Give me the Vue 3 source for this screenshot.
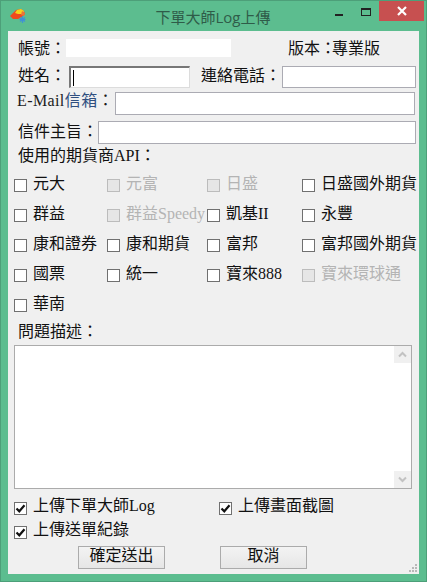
<script setup>
const brokers = [
  { name: '元大' },
  { name: '元富', disabled: true },
  { name: '日盛', disabled: true },
  { name: '日盛國外期貨' },
  { name: '群益' },
  { name: '群益Speedy', disabled: true },
  { name: '凱基II' },
  { name: '永豐' },
  { name: '康和證券' },
  { name: '康和期貨' },
  { name: '富邦' },
  { name: '富邦國外期貨' },
  { name: '國票' },
  { name: '統一' },
  { name: '寶來888' },
  { name: '寶來環球通', disabled: true },
  { name: '華南' }
]

const uploads = ['上傳下單大師Log', '上傳畫面截圖', '上傳送單紀錄']
</script>

<template>
  <div class="window">
    <div class="titlebar">
      <svg class="app-icon" width="18" height="16" viewBox="0 0 18 16">
        <path d="M1 9 L4 6 L7 3 L12 2 L15 4 L16 7 L13 10 L9 12 L4 12 Z" fill="#f04a1e" />
        <path d="M6 6 L8 3 L12 2 L15 4 L14 7 L9 7 Z" fill="#f7d21c" />
        <path d="M13 4 L16 6 L15 9 L12 8 Z" fill="#e8743a" />
        <path d="M13.5 9 V16 M10.5 12.5 H16.5 M11 10.5 L16 14.5 M16 10.5 L11 14.5" stroke="#3f8fd8" stroke-width="1.2" />
      </svg>
      <span class="title">下單大師Log上傳</span>
      <div class="controls">
        <span class="min"></span>
        <span class="max"></span>
        <span class="close">
          <svg width="10" height="10" viewBox="0 0 10 10">
            <path d="M1 1 L9 9 M9 1 L1 9" stroke="#fff" stroke-width="2.2" />
          </svg>
        </span>
      </div>
    </div>

    <div class="client">
      <div class="row row-account">
        <span class="label">帳號：</span>
        <div class="account-value"></div>
        <span class="version">版本<span class="tight">：</span>專業版</span>
      </div>

      <div class="row row-name">
        <span class="label">姓名：</span>
        <div class="field name-field"><i class="caret"></i></div>
        <span class="label contact-label">連絡電話：</span>
        <div class="field contact-field"></div>
      </div>

      <div class="row row-email">
        <span class="label email-label">E-Mail<em>信箱</em>：</span>
        <div class="field grow"></div>
      </div>

      <div class="row row-subject">
        <span class="label">信件主旨：</span>
        <div class="field grow"></div>
      </div>

      <div class="section-label api-label">使用的期貨商API：</div>

      <div class="broker-grid">
        <label v-for="b in brokers" :key="b.name" class="check" :class="{ off: b.disabled }">
          <span class="box"></span>
          <span class="check-text">{{ b.name }}</span>
        </label>
      </div>

      <div class="section-label desc-label">問題描述：</div>

      <div class="textarea">
        <div class="scrollbar">
          <span class="arrow">
            <svg width="9" height="7" viewBox="0 0 9 7"><path d="M1 5.5 L4.5 2 L8 5.5" fill="none" stroke="#c2c2c2" stroke-width="2" /></svg>
          </span>
          <span class="arrow">
            <svg width="9" height="7" viewBox="0 0 9 7"><path d="M1 1.5 L4.5 5 L8 1.5" fill="none" stroke="#c2c2c2" stroke-width="2" /></svg>
          </span>
        </div>
      </div>

      <div class="upload-grid">
        <label v-for="u in uploads" :key="u" class="check">
          <span class="box">
            <svg width="11" height="11" viewBox="0 0 11 11"><path d="M1.5 5.5 L4.3 8.3 L9.5 2.2" fill="none" stroke="#111" stroke-width="2.2" /></svg>
          </span>
          <span class="check-text">{{ u }}</span>
        </label>
      </div>

      <div class="buttons">
        <button class="btn"><span>確定送出</span></button>
        <button class="btn"><span>取消</span></button>
      </div>

      <svg class="grip" width="9" height="9" viewBox="0 0 9 9" fill="#b8b8b8">
        <rect x="6" y="0" width="2" height="2" />
        <rect x="3" y="3" width="2" height="2" />
        <rect x="6" y="3" width="2" height="2" />
        <rect x="0" y="6" width="2" height="2" />
        <rect x="3" y="6" width="2" height="2" />
        <rect x="6" y="6" width="2" height="2" />
      </svg>
    </div>
  </div>
</template>

<style scoped>
.window {
  box-sizing: border-box;
  width: 427px;
  height: 582px;
  background: #5cbd8f;
  border: 1px solid #4d9f79;
  font-family: "Liberation Serif", "Noto Sans CJK TC", serif;
  font-size: 16px;
  color: #111;
  overflow: hidden;
}

.titlebar {
  position: relative;
  height: 30px;
  display: flex;
  justify-content: center;
}

.app-icon {
  position: absolute;
  left: 8px;
  top: 6px;
}

.title {
  margin-top: 6px;
  margin-left: -1px;
  font-family: "Open Sans", "Noto Sans CJK TC", sans-serif;
  font-size: 15px;
  line-height: 20px;
  color: #2f5c49;
}

.controls {
  position: absolute;
  right: 2px;
  top: 0;
  display: flex;
  align-items: flex-start;
}

.min {
  width: 8px;
  height: 2px;
  margin-top: 13px;
  margin-right: 18px;
  background: #222;
}

.max {
  box-sizing: border-box;
  width: 10px;
  height: 8px;
  margin-top: 7px;
  margin-right: 8px;
  border: 1px solid #222;
  border-top-width: 2px;
}

.close {
  width: 45px;
  height: 20px;
  background: #c75050;
  display: flex;
  align-items: center;
  justify-content: center;
}

.client {
  position: relative;
  box-sizing: border-box;
  width: 411px;
  height: 543px;
  margin-left: 7px;
  padding: 8px 3px 0 6px;
  background: #f0f0f0;
}

.row {
  display: flex;
  align-items: center;
  line-height: 18px;
}

.label,
.section-label,
.version {
  white-space: nowrap;
}

.label {
  margin-left: 4px;
}

.row-account {
  height: 18px;
}

.row-account .label,
.version {
  margin-top: 2px;
}

.account-value {
  width: 165px;
  height: 18px;
  background: #fff;
}

.version {
  margin-left: 57px;
}

.tight {
  letter-spacing: -4px;
}

.row-name {
  height: 22px;
  margin-top: 9px;
}

.row-name .label {
  margin-bottom: 2px;
}

.field {
  box-sizing: border-box;
  height: 100%;
  background: #fff;
  border: 1px solid #ababb3;
}

.grow {
  flex: 1;
}

.name-field {
  display: flex;
  align-items: center;
  width: 121px;
  margin-left: 3px;
  padding-left: 2px;
  border-color: #dcdcdc;
  border-top: 2px solid #777;
  border-left: 2px solid #777;
}

.caret {
  width: 1px;
  height: 16px;
  background: #000;
}

.contact-label {
  margin-left: 11px;
}

.contact-field {
  width: 134px;
  margin-left: 1px;
}

.row-email {
  height: 23px;
  margin-top: 4px;
  margin-right: 1px;
}

.email-label {
  width: 98px;
  margin-left: 3px;
  margin-bottom: 6px;
  letter-spacing: 0.4px;
  color: #1b1b1b;
}

.email-label em {
  font-style: normal;
  color: #2f4f7f;
}

.row-subject {
  height: 23px;
  margin-top: 6px;
}

.row-subject .label {
  width: 80px;
  margin-bottom: 2px;
}

.section-label {
  height: 18px;
  margin-left: 4px;
  line-height: 18px;
}

.api-label {
  margin-top: 3px;
}

.broker-grid {
  display: grid;
  grid-template-columns: 93px 100px 95px 1fr;
  grid-auto-rows: 30px;
  margin-top: 5px;
}

.check {
  display: flex;
  align-items: center;
  white-space: nowrap;
}

.box {
  box-sizing: border-box;
  flex: none;
  display: flex;
  align-items: center;
  justify-content: center;
  width: 13px;
  height: 13px;
  margin-top: 1px;
  background: #fff;
  border: 1px solid #707070;
}

.check-text {
  margin-left: 6px;
  margin-bottom: 7px;
}

.off {
  color: #b4b4b4;
}

.off .box {
  background: #e6e6e6;
  border-color: #bcbcbc;
}

.desc-label {
  margin-top: 3px;
}

.textarea {
  box-sizing: border-box;
  display: flex;
  justify-content: flex-end;
  width: 398px;
  height: 144px;
  margin-top: 4px;
  background: #fff;
  border: 1px solid #ababab;
}

.scrollbar {
  display: flex;
  flex-direction: column;
  justify-content: space-between;
  width: 17px;
  background: #fff;
}

.arrow {
  display: flex;
  align-items: center;
  justify-content: center;
  height: 17px;
  background: #f0f0f0;
}

.upload-grid {
  display: grid;
  grid-template-columns: 205px 1fr;
  grid-auto-rows: 24px;
  margin-top: 7px;
}

.upload-grid .check-text {
  margin-bottom: 9px;
}

.buttons {
  display: flex;
  gap: 55px;
  margin-top: 2px;
  padding-left: 64px;
}

.btn {
  box-sizing: border-box;
  width: 87px;
  height: 23px;
  padding: 0 0 3px;
  font: inherit;
  line-height: 18px;
  color: #111;
  background: linear-gradient(#f3f3f3, #e6e6e6);
  border: 1px solid #ababab;
}

.grip {
  position: absolute;
  right: 1px;
  bottom: 1px;
}
</style>

<style>
body {
  background: #5cbd8f;
}
</style>
